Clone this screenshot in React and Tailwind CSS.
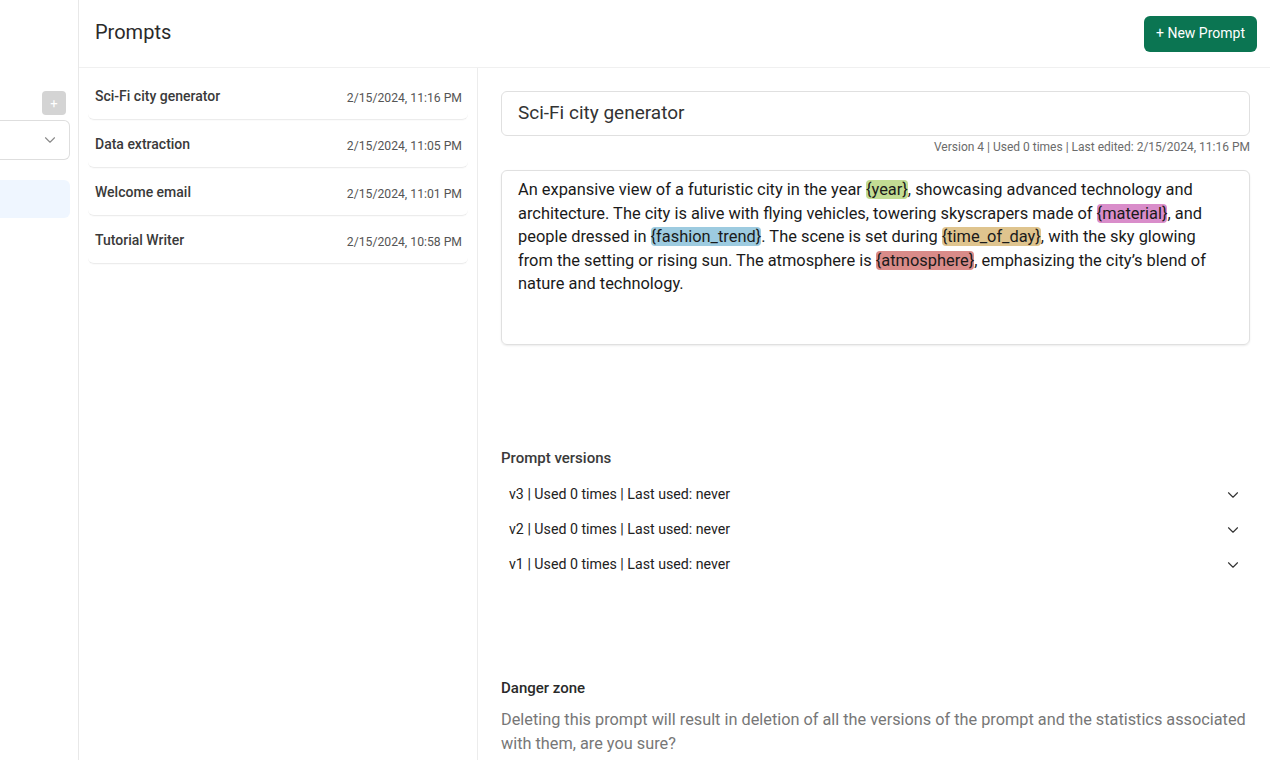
import { ChevronDown } from "lucide-react";

const prompts = [
  { name: "Sci-Fi city generator", date: "2/15/2024, 11:16 PM" },
  { name: "Data extraction", date: "2/15/2024, 11:05 PM" },
  { name: "Welcome email", date: "2/15/2024, 11:01 PM" },
  { name: "Tutorial Writer", date: "2/15/2024, 10:58 PM" },
];

const versions = ["v3", "v2", "v1"];

function Tag({ children, className }) {
  return <span className={`rounded-[4px] ${className}`}>{children}</span>;
}

export default function App() {
  return (
    <div className="flex h-[760px] w-[1270px] overflow-hidden bg-white text-[#1f1f1f]" style={{ fontFamily: "Roboto, 'Noto Sans', sans-serif" }}>
      {/* sidebar */}
      <div className="w-[79px] shrink-0 border-r border-[#e8e8e8] pt-[91px] pr-[8px]">
        <div className="flex justify-end pr-[4px]">
          <div className="flex h-[24px] w-[24px] items-center justify-center rounded-[4px] bg-[#d4d4d4] text-[13px] leading-none text-white">+</div>
        </div>
        <div className="mt-[5px] flex h-[40px] items-center justify-end rounded-r-[6px] border border-l-0 border-[#dedede] pr-[10px]">
          <ChevronDown className="h-[18px] w-[18px] text-[#8a8a8a]" strokeWidth={1.5} />
        </div>
        <div className="mt-[20px] h-[38px] rounded-r-[6px] bg-[#eff6ff]" />
      </div>

      {/* main */}
      <div className="flex min-w-0 flex-1 flex-col">
        <div className="flex h-[68px] shrink-0 items-center justify-between border-b border-[#f0f0f0] pl-[16px] pr-[13px]">
          <h1 className="pb-[4px] text-[20px] font-normal text-[#2a2a2a]">Prompts</h1>
          <button className="h-[36px] rounded-[6px] bg-[#0b7552] px-[12px] text-[14px] text-white">+ New Prompt</button>
        </div>

        <div className="flex min-h-0 flex-1">
          {/* list */}
          <div className="w-[399px] shrink-0 border-r border-[#ececec] px-[9px] pt-[4px]">
            {prompts.map((p) => (
              <div key={p.name} className="flex h-[48px] items-center justify-between rounded-[6px] border-b border-[#ececec] pl-[7px] pr-[6px] shadow-[0_1px_1px_rgba(0,0,0,0.02)]">
                <span className="pt-[1px] text-[14px] font-medium text-[#3a3a3a]">{p.name}</span>
                <span className="pt-[5px] text-[12.2px] text-[#555]">{p.date}</span>
              </div>
            ))}
          </div>

          {/* detail */}
          <div className="min-w-0 flex-1 pl-[23px] pr-[20px] pt-[23px]">
            <div className="flex h-[45px] items-center rounded-[6px] border border-[#e0e0e0] px-[16px] text-[19px] text-[#333]">
              Sci-Fi city generator
            </div>
            <div className="mt-[2px] text-right text-[12px] text-[#6b6b6b]">
              Version 4 | Used 0 times | Last edited: 2/15/2024, 11:16 PM
            </div>
            <div className="mt-[14px] h-[175px] rounded-[6px] border border-[#e0e0e0] px-[16px] pt-[7px] text-[16.4px] leading-[23.5px] text-[#1a1a1a] shadow-[0_1px_2px_rgba(0,0,0,0.08)]">
              An expansive view of a futuristic city in the year <Tag className="bg-[#c2dc93]">{"{year}"}</Tag>, showcasing advanced technology and architecture. The city is alive with flying vehicles, towering skyscrapers made of <Tag className="bg-[#d98dca]">{"{material}"}</Tag>, and people dressed in <Tag className="bg-[#9dcbe0]">{"{fashion_trend}"}</Tag>. The scene is set during <Tag className="bg-[#dfc48e]">{"{time_of_day}"}</Tag>, with the sky glowing from the setting or rising sun. The atmosphere is <Tag className="bg-[#d98b89]">{"{atmosphere}"}</Tag>, emphasizing the city’s blend of nature and technology.
            </div>

            <div className="mt-[102px] text-[15px] font-medium text-[#3a3a3a]">Prompt versions</div>
            <div className="mt-[8px]">
              {versions.map((v) => (
                <div key={v} className="flex h-[35px] items-center justify-between pl-[8px] pr-[8px]">
                  <span className="text-[14.2px] text-[#222]">{v} | Used 0 times | Last used: never</span>
                  <ChevronDown className="h-[18px] w-[18px] text-[#333]" strokeWidth={1.5} />
                </div>
              ))}
            </div>

            <div className="mt-[94px] text-[15px] font-medium text-[#2a2a2a]">Danger zone</div>
            <p className="mt-[9px] text-[16.3px] leading-[23.5px] text-[#777]">
              Deleting this prompt will result in deletion of all the versions of the prompt and the statistics associated with them, are you sure?
            </p>
          </div>
        </div>
      </div>
    </div>
  );
}
